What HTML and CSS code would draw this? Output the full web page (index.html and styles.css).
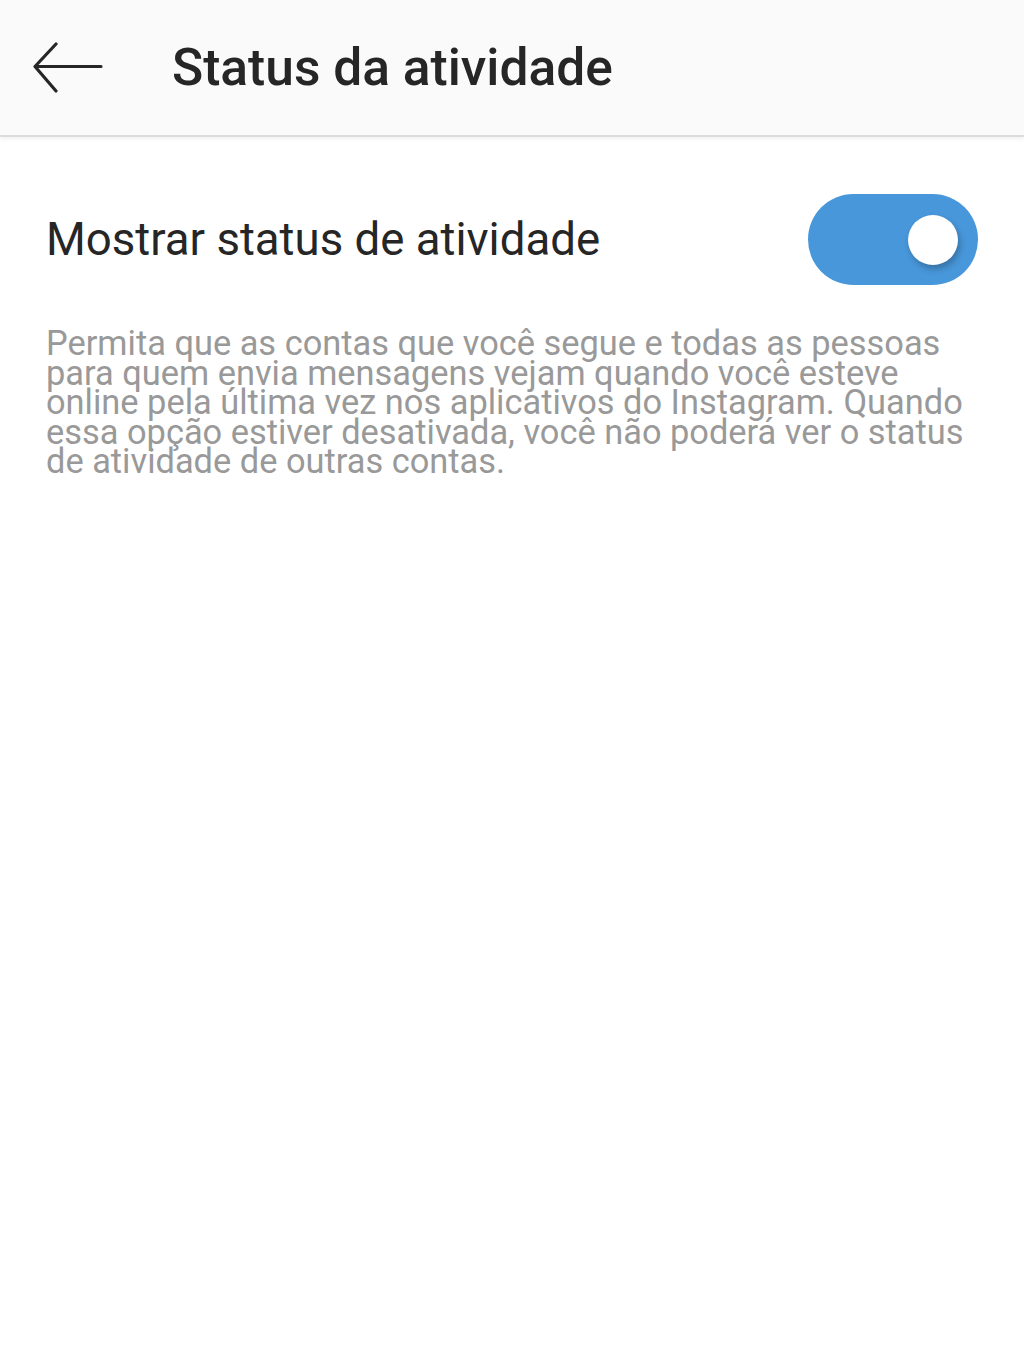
FILE: index.html
```html
<!DOCTYPE html>
<html lang="pt-BR">
<head>
  <meta charset="UTF-8">
  <title>Status da atividade</title>
  <link rel="stylesheet" href="styles.css">
</head>
<body>

  <header class="topbar">
    <button class="back" aria-label="Voltar">
      <svg width="70" height="52" viewBox="0 0 70 52">
        <path d="M68 24.5 H3 M23 2 L2 24.5 L23 49" fill="none" stroke="#262626" stroke-width="3.2" stroke-linecap="round" stroke-linejoin="round"/>
      </svg>
    </button>
    <h1>Status da atividade</h1>
  </header>

  <main class="content">
    <div class="setting">
      <span class="setting-label">Mostrar status de atividade</span>
      <div class="toggle on"><div class="knob"></div></div>
    </div>
    <p class="hint">Permita que as contas que você segue e todas as pessoas para quem envia mensagens vejam quando você esteve online pela última vez nos aplicativos do Instagram. Quando essa opção estiver desativada, você não poderá ver o status de atividade de outras contas.</p>
  </main>

</body>
</html>
```

FILE: styles.css
```css
body {
  margin: 0;
  font-family: Roboto, 'Noto Sans', sans-serif;
  background: #fff;
  color: #262626;
}

.topbar {
  height: 135px;
  background: #fafafa;
  display: flex;
  align-items: center;
  border-bottom: 2px solid #dcdcdc;
  box-shadow: 0 2px 4px rgba(0,0,0,0.06);
}

.back {
  background: none;
  border: none;
  padding: 0;
  margin-left: 33px;
  margin-top: 0;
  width: 70px;
  height: 52px;
}

.topbar h1 {
  margin: 0 0 0 69px;
  font-size: 51.5px;
  font-weight: 500;
  color: #262626;
}

.content {
  padding: 0 46px;
}

.setting {
  display: flex;
  align-items: center;
  justify-content: space-between;
  margin-top: 57px;
  height: 91px;
}

.setting-label {
  font-size: 45.6px;
  color: #262626;
}

.toggle {
  width: 170px;
  height: 91px;
  border-radius: 46px;
  background: #4897da;
  position: relative;
}

.knob {
  position: absolute;
  right: 20px;
  top: 21px;
  width: 50px;
  height: 50px;
  border-radius: 50%;
  background: #fff;
  box-shadow: 2px 4px 6px rgba(0,0,0,0.25);
}

.hint {
  margin: 44px 0 0;
  font-size: 34.4px;
  line-height: 29.5px;
  color: #999;
}
```
